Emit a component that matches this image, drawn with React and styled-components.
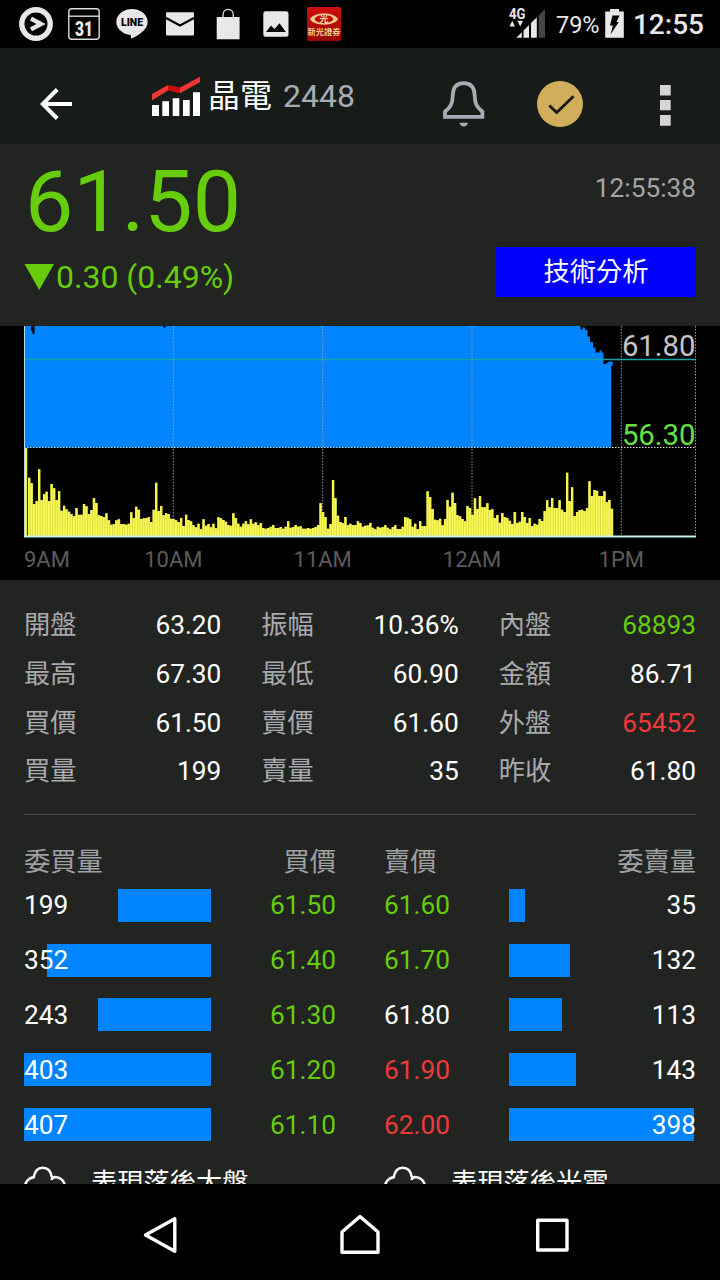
import React from "react";
import styled, { createGlobalStyle } from "styled-components";

const colors = {
  up: "#f03a3a",
  down: "#66cc0c",
  flat: "#ffffff",
};

const stats = [
  { label: "開盤", value: "63.20" },
  { label: "振幅", value: "10.36%" },
  { label: "內盤", value: "68893", trend: "down" },
  { label: "最高", value: "67.30" },
  { label: "最低", value: "60.90" },
  { label: "金額", value: "86.71" },
  { label: "買價", value: "61.50" },
  { label: "賣價", value: "61.60" },
  { label: "外盤", value: "65452", trend: "up" },
  { label: "買量", value: "199" },
  { label: "賣量", value: "35" },
  { label: "昨收", value: "61.80" },
];

const bids = [
  { qty: 199, price: "61.50", trend: "down" },
  { qty: 352, price: "61.40", trend: "down" },
  { qty: 243, price: "61.30", trend: "down" },
  { qty: 403, price: "61.20", trend: "down" },
  { qty: 407, price: "61.10", trend: "down" },
];

const asks = [
  { qty: 35, price: "61.60", trend: "down" },
  { qty: 132, price: "61.70", trend: "down" },
  { qty: 113, price: "61.80", trend: "flat" },
  { qty: 143, price: "61.90", trend: "up" },
  { qty: 398, price: "62.00", trend: "up" },
];

// a full bar is 402 lots, anything above is capped
const FULL_QTY = 402;
const barWidth = (qty) => `${Math.min(100, (qty / FULL_QTY) * 100)}%`;

// one bar per minute since the open, in thirds of a pixel
const volumes = [
  264, 175, 158, 96, 105, 200, 108, 125, 133, 105, 156, 143, 108, 134, 76, 91,
  80, 73, 66, 60, 84, 64, 64, 96, 89, 66, 78, 113, 99, 62, 60, 56, 68, 47, 34,
  36, 47, 50, 36, 36, 34, 37, 71, 54, 88, 79, 51, 53, 54, 57, 42, 79, 160, 75,
  90, 62, 68, 66, 52, 51, 47, 42, 54, 30, 64, 48, 44, 32, 26, 37, 20, 50, 31,
  36, 26, 37, 23, 56, 53, 48, 43, 33, 31, 68, 54, 37,
  28, 37, 44, 35, 50, 37, 41, 32, 39, 24, 22, 24, 28, 33, 24, 24, 27, 22, 28,
  44, 25, 27, 33, 28, 29, 22, 22, 24, 22, 24, 27, 33, 98, 72, 57, 22, 36, 168,
  113, 61, 42, 39, 57, 33, 37, 33, 33, 44, 39, 28, 31, 32, 39, 25, 20, 28, 25,
  27, 32, 25, 20, 27, 32, 21, 21, 28, 57, 55, 50, 28, 37, 21, 44, 30, 30, 134,
  117, 81, 49, 47, 52, 32, 51, 108, 88, 130, 99, 62, 59, 51, 44, 90, 84, 64,
  113, 81, 120,
  86, 86, 98, 78, 80, 54, 63, 40, 69, 57, 54, 46, 36, 72, 39, 43, 72, 57, 39,
  54, 30, 37, 34, 51, 45, 75, 107, 86, 114, 84, 84, 107, 79, 72, 190, 105, 146,
  60, 72, 77, 79, 75, 84, 164, 120, 138, 136, 120, 120, 134, 101, 108, 82,
];

const BASE = 210.5;
const STEP = 585.2 / (volumes.length - 1);

const volumePath = (width) =>
  volumes
    .map((v, i) => {
      const x = i === 0 ? 0.8 : 1.6 + i * STEP;
      const h = v / 3 + 0.5;
      return `M${x.toFixed(2)} ${BASE}v${-h.toFixed(1)}h${width}v${h.toFixed(1)}z`;
    })
    .join("");

const StatusIcons = () => (
  <StatusGroup>
    <svg width="48" height="48" viewBox="0 0 48 48">
      <circle cx="24" cy="24" r="14.2" fill="none" stroke="#e8e8e8" strokeWidth="5.4" />
      <path d="M19 18.6L29 24L19 29.4" fill="none" stroke="#e8e8e8" strokeWidth="4.4" />
    </svg>
    <svg width="48" height="48" viewBox="0 0 48 48">
      <rect x="8.8" y="8.8" width="30.4" height="30.4" rx="3" fill="none" stroke="#dcdcdc" strokeWidth="1.4" />
      <path d="M9 16.2H39" stroke="#dcdcdc" strokeWidth="1.4" />
      <text x="24" y="35.6" textAnchor="middle" fontSize="20.5" fontWeight="900" fill="#e8e8e8" textLength="18" lengthAdjust="spacingAndGlyphs">31</text>
    </svg>
    <svg width="48" height="48" viewBox="0 0 48 48">
      <path d="M24 9C15.2 9 8.3 14.8 8.3 22C8.3 28.5 14.2 33.9 22 34.9C23.6 35.2 23.1 36.8 22.9 38.8C29 36.5 39.7 30 39.7 22C39.7 14.8 32.8 9 24 9Z" fill="#e8e8e8" />
      <text x="24" y="26.4" textAnchor="middle" fontSize="11.2" fontWeight="900" fill="#000" textLength="22" lengthAdjust="spacingAndGlyphs">LINE</text>
    </svg>
    <svg width="48" height="48" viewBox="0 0 48 48">
      <rect x="10" y="12.3" width="28" height="23.2" rx="1" fill="#e8e8e8" />
      <path d="M10 18L24 25.4L38 18" fill="none" stroke="#000" strokeWidth="2.2" />
    </svg>
    <svg width="48" height="48" viewBox="0 0 48 48">
      <path d="M12.7 17H35.6V39.3H12.7Z" fill="#e8e8e8" />
      <path d="M19 19V15C19 7.5 29.3 7.5 29.3 15V19" fill="none" stroke="#e8e8e8" strokeWidth="1.3" />
    </svg>
    <svg width="48" height="48" viewBox="0 0 48 48">
      <rect x="11.3" y="11.3" width="25.2" height="25.4" rx="2.5" fill="#e8e8e8" />
      <path d="M14 32L19 25.5L22.5 29L27.5 23.3L33.8 32Z" fill="#000" />
    </svg>
    <svg width="48" height="48" viewBox="0 0 48 48">
      <defs>
        <linearGradient id="brand" x1="0" y1="0" x2="0" y2="1">
          <stop offset="0" stopColor="#d01010" />
          <stop offset="1" stopColor="#980400" />
        </linearGradient>
      </defs>
      <rect x="7" y="7" width="34" height="34" rx="1.5" fill="url(#brand)" />
      <path
        d="M10 19C13 11.500 35 11.500 38 19C35 26.500 13 26.500 10 19ZM14.500 19C17 24.500 31 24.500 33.500 19C31 13.500 17 13.500 14.500 19Z"
        fill="#f4c888"
        fillRule="evenodd"
      />
      <text x="24" y="22.3" textAnchor="middle" fontSize="9" fontWeight="700" fill="#f8d8a0">光</text>
      <text x="24" y="35" textAnchor="middle" fontSize="8.2" fontWeight="700" fill="#f4d090">新光證券</text>
    </svg>
  </StatusGroup>
);

const SignalIcon = () => (
  <svg width="36" height="48" viewBox="0 0 36 48">
    <text x="0" y="19.3" fontSize="14" fontWeight="700" fill="#e8e8e8" textLength="16.5" lengthAdjust="spacingAndGlyphs">4G</text>
    <path d="M0.5 26.5L3.2 20.800L6 26.5ZM8.400 20.800H14L11.2 26.5Z" fill="#e8e8e8" />
    <path d="M7.3 37.8L12.8 32.3V37.8ZM14.5 30.5L20 25V37.8H14.5ZM22 23L27.8 17.2V37.8H22Z" fill="#e8e8e8" />
    <path d="M29.6 15.4L36 9V37.8H29.6Z" fill="#444" />
  </svg>
);

const BatteryIcon = () => (
  <svg width="19" height="48" viewBox="0 0 19 48">
    <path d="M5 9H14V11.5H18.8V37.8H0.2V11.5H5Z" fill="#e8e8e8" />
    <path d="M7.5 15.5H14.5L11.5 22H13.8L5.5 34.5L7.9 25.5H5Z" fill="#000" />
  </svg>
);

const BackIcon = () => (
  <svg width="32" height="32" viewBox="0 0 32 32">
    <path d="M32 16H3M17.2 1.5L2.7 16L17.2 30.5" fill="none" stroke="#fff" strokeWidth="3.9" />
  </svg>
);

const LogoIcon = () => (
  <svg width="48" height="40" viewBox="0 0 48 40">
    <path d="M0 29H7V40H0ZM10.3 25.3H17V40H10.3ZM20.7 22.3H27.3V40H20.7ZM31 24H37.7V40H31ZM41 16.3H48V40H41Z" fill="#fff" />
    <path d="M0 17.9L16 8.9V14.5L0 24.4ZM28 11.5L48 0.7V6.2L28 17.2Z" fill="#f03535" />
    <path d="M16 8.9L28 11.5V17.2L16 14.5Z" fill="#cc0c0c" />
  </svg>
);

const BellIcon = () => (
  <svg width="42" height="48" viewBox="0 0 42 48">
    <path
      d="M2 36.8V31.7C7.5 27 9.5 24 9.7 16C9.8 8 13 3.200 20.7 3.200S31.600 8 31.7 16C31.9 24 33.9 27 39.4 31.7V36.8Z"
      fill="none"
      stroke="#a9abb5"
      strokeWidth="3.8"
    />
    <path d="M16.5 42.7H25C24.5 45 23 46.500 20.7 46.5S17 45 16.5 42.7Z" fill="#a9abb5" />
  </svg>
);

const CheckIcon = () => (
  <svg width="46" height="46" viewBox="0 0 46 46">
    <circle cx="23" cy="23" r="23" fill="#d0ae5c" />
    <path d="M12.3 24.5L19.7 31.5L36.5 15.3" fill="none" stroke="#1a1c18" strokeWidth="2.9" />
  </svg>
);

const MoreIcon = () => (
  <svg width="11" height="44" viewBox="0 0 11 44">
    <path d="M0 3H10.7V13.500H0ZM0 18H10.7V28.300H0ZM0 33H10.7V43.700H0Z" fill="#d6d4d6" />
  </svg>
);

const CloudIcon = () => (
  <svg width="42" height="34" viewBox="0 0 42 34">
    <path
      d="M27.500 14C28 11.800 29 11 31 11C37 11.500 41 15.500 41 21.500C41 27.500 36.500 32 31 32H11C5.500 32 1 27.500 1 21.500C1 16 4.500 11.800 9.800 11.100C10.800 5.500 14 1.800 18.700 1.800C23.300 1.800 26.800 5 27.800 11.100"
      fill="none"
      stroke="#fff"
      strokeWidth="2.600"
    />
  </svg>
);

const IntradayChart = () => (
  <svg width="672" height="212" viewBox="0 0 672 212">
    <path
      d="M0 0H7V5H8.5V8H10.5V0H139V1.5H142V0H556.5V3.5H558.5V1.5H561V4H563.5V10.5H566V16H569V21.5H571.5V26.5H575.5V24.5H577.5V26.5H579.5V38H582.5V36.5H584.5V35.5H588.7V39.5H587.3V121.5H0Z"
      fill="#0084ff"
    />
    <path d="M0 33.5H672" stroke="#12a5a8" strokeWidth="1.4" />
    <path d="M0 121.5H672" stroke="#d0d0d0" strokeDasharray="1.5 1.5" />
    <path
      d="M149.3 0V210M298.7 0V210M448 0V210M597.3 0V210M671.5 0V210"
      stroke="#a0a8b0"
      strokeDasharray="1.5 1.5"
      strokeWidth="0.9"
    />
    <path d={volumePath(2.5)} fill="#d2d244" />
    <path d={volumePath(1.8)} fill="#fafa52" />
    <path d="M0.5 0V210" stroke="#c8e4e8" strokeWidth="0.9" />
    <path d="M0 210.5H672" stroke="#c4f0ee" strokeWidth="2" />
    <text x="671.5" y="29.8" textAnchor="end" fontSize="29.3" fill="#c4c4c4">61.80</text>
    <text x="671.5" y="118.5" textAnchor="end" fontSize="29.3" fill="#66e045">56.30</text>
  </svg>
);

export default function App() {
  return (
    <>
      <GlobalStyle />
      <Screen>
        <StatusBar>
          <StatusIcons />
          <StatusGroup>
            <SignalIcon />
            <Percent>79%</Percent>
            <BatteryIcon />
            <Clock>12:55</Clock>
          </StatusGroup>
        </StatusBar>

        <Header>
          <BackIcon />
          <Title>
            <LogoIcon />
            <StockName>晶電</StockName>
            <StockCode>2448</StockCode>
          </Title>
          <Actions>
            <BellIcon />
            <CheckIcon />
            <MoreIcon />
          </Actions>
        </Header>

        <Quote>
          <QuoteMain>
            <Price>61.50</Price>
            <Change>
              <DownArrow width="30" height="26" viewBox="0 0 30 26">
                <path d="M0.5 0H30L15.2 26Z" fill={colors.down} />
              </DownArrow>
              0.30 (0.49%)
            </Change>
          </QuoteMain>
          <QuoteSide>
            <Time>12:55:38</Time>
            <AnalysisButton>技術分析</AnalysisButton>
          </QuoteSide>
        </Quote>

        <ChartPanel>
          <IntradayChart />
          <Axis>
            <span>9AM</span>
            <span>10AM</span>
            <span>11AM</span>
            <span>12AM</span>
            <span>1PM</span>
          </Axis>
        </ChartPanel>

        <Details>
          <Stats>
            {stats.map((item) => (
              <Stat key={item.label}>
                <Label>{item.label}</Label>
                <Value $trend={item.trend}>{item.value}</Value>
              </Stat>
            ))}
          </Stats>

          <Book>
            <div>
              <BookHead>
                <span>委買量</span>
                <span>買價</span>
              </BookHead>
              {bids.map((row) => (
                <BookRow key={row.price}>
                  <Depth>
                    <Bar $side="bid" style={{ width: barWidth(row.qty) }} />
                    <Qty>{row.qty}</Qty>
                  </Depth>
                  <Value $trend={row.trend}>{row.price}</Value>
                </BookRow>
              ))}
            </div>
            <div>
              <BookHead>
                <span>賣價</span>
                <span>委賣量</span>
              </BookHead>
              {asks.map((row) => (
                <BookRow key={row.price}>
                  <Value $trend={row.trend}>{row.price}</Value>
                  <Depth>
                    <Bar $side="ask" style={{ width: barWidth(row.qty) }} />
                    <Qty $right>{row.qty}</Qty>
                  </Depth>
                </BookRow>
              ))}
            </div>
          </Book>

          <Outlook>
            <OutlookItem>
              <CloudIcon />
              表現落後大盤
            </OutlookItem>
            <OutlookItem>
              <CloudIcon />
              表現落後光電
            </OutlookItem>
          </Outlook>
        </Details>

        <NavBar>
          <svg width="40" height="42" viewBox="0 0 40 42">
            <path d="M34.8 4.8V37.2L5.5 21Z" fill="none" stroke="#fff" strokeWidth="3.4" strokeLinejoin="round" />
          </svg>
          <svg width="40" height="42" viewBox="0 0 40 42">
            <path d="M2 38.3V18L20 2.5L38 18V38.3Z" fill="none" stroke="#fff" strokeWidth="3.4" strokeLinejoin="round" />
          </svg>
          <svg width="40" height="42" viewBox="0 0 40 42">
            <rect x="5.7" y="6.3" width="29.3" height="29.7" fill="none" stroke="#fff" strokeWidth="3.4" strokeLinejoin="round" />
          </svg>
        </NavBar>
      </Screen>
    </>
  );
}

const GlobalStyle = createGlobalStyle`
  * {
    box-sizing: border-box;
  }
  body {
    margin: 0;
    background: #000;
  }
  svg {
    display: block;
    flex-shrink: 0;
  }
`;

const Screen = styled.div`
  display: flex;
  flex-direction: column;
  width: 720px;
  height: 1280px;
  overflow: hidden;
  background: #222422;
  color: #fff;
  font-family: Roboto, "Noto Sans CJK TC", sans-serif;
  font-size: 26.25px;
`;

const StatusBar = styled.div`
  display: flex;
  justify-content: space-between;
  height: 48px;
  flex-shrink: 0;
  padding: 0 16px 0 12px;
  background: #000;
`;

const StatusGroup = styled.div`
  display: flex;
  color: #e8e8e8;
  line-height: 50px;
`;

const Percent = styled.span`
  width: 60px;
  padding-left: 11px;
  font-size: 23.5px;
`;

const Clock = styled.span`
  padding-left: 9px;
  font-size: 28px;
  font-weight: 500;
`;

const Header = styled.header`
  display: flex;
  align-items: center;
  height: 96px;
  flex-shrink: 0;
  padding: 16px 49px 0 40px;
  background: #181c19;
`;

const Title = styled.div`
  display: flex;
  align-items: center;
  padding: 0 0 16px 80px;
  font-size: 32px;
  line-height: 40px;
`;

const StockName = styled.span`
  margin-left: 8px;
`;

const StockCode = styled.span`
  margin-left: 11px;
  color: #a9abb5;
`;

const Actions = styled.div`
  display: flex;
  align-items: center;
  margin-left: auto;

  svg:nth-child(2) {
    margin: 0 77px 0 52px;
  }
`;

const Quote = styled.section`
  display: flex;
  justify-content: space-between;
  height: 182px;
  flex-shrink: 0;
  padding: 0 24px;
`;

const QuoteMain = styled.div`
  color: ${colors.down};
`;

const Price = styled.div`
  padding: 8px 0 0 1px;
  font-size: 86px;
  line-height: 100px;
`;

const Change = styled.div`
  display: flex;
  align-items: center;
  padding-top: 5px;
  font-size: 32px;
  line-height: 40px;
`;

const DownArrow = styled.svg`
  margin-right: 2px;
`;

const QuoteSide = styled.div`
  display: flex;
  flex-direction: column;
  align-items: flex-end;
`;

const Time = styled.span`
  padding-top: 28px;
  color: #a4a4a6;
  line-height: 32px;
`;

const AnalysisButton = styled.button`
  width: 200px;
  height: 50px;
  margin-top: 43px;
  padding: 0 0 5px;
  border: none;
  background: #0000ff;
  color: #fff;
  font: inherit;
`;

const ChartPanel = styled.section`
  height: 254px;
  flex-shrink: 0;
  padding: 0 24px;
  background: #000;
`;

const Axis = styled.div`
  display: grid;
  grid-template-columns: 1fr repeat(4, 2fr);
  color: #5c5c5c;
  font-size: 22px;
  line-height: 44px;
  text-align: center;

  span:first-child {
    text-align: left;
  }
`;

const Details = styled.section`
  flex: 1;
  min-height: 0;
  overflow: hidden;
  padding: 0 24px;
`;

const Stats = styled.div`
  display: grid;
  grid-template-columns: repeat(3, 1fr);
  grid-auto-rows: 48.7px;
  column-gap: 40px;
  height: 235px;
  padding-top: 21px;
  border-bottom: 1px solid #484a48;
`;

const Stat = styled.div`
  display: flex;
  align-items: center;
  justify-content: space-between;
`;

const Label = styled.span`
  padding-bottom: 4px;
  color: #a9a9ae;
`;

const Value = styled.span`
  color: ${({ $trend }) => colors[$trend || "flat"]};
`;

const Book = styled.div`
  display: grid;
  grid-template-columns: 1fr 1fr;
  column-gap: 48px;
  padding-top: 28px;
`;

const BookHead = styled.div`
  display: flex;
  justify-content: space-between;
  height: 35px;
  color: #a0a0a5;
  line-height: 39px;
`;

const BookRow = styled.div`
  display: flex;
  align-items: center;
  justify-content: space-between;
  height: 54.8px;
`;

const Depth = styled.div`
  display: grid;
  align-items: center;
  width: 187px;
`;

const Bar = styled.div`
  grid-area: 1 / 1;
  justify-self: ${({ $side }) => ($side === "bid" ? "end" : "start")};
  height: 33px;
  background: #0084ff;
`;

const Qty = styled.span`
  grid-area: 1 / 1;
  text-align: ${({ $right }) => ($right ? "right" : "left")};
`;

const Outlook = styled.div`
  display: grid;
  grid-template-columns: 1fr 1fr;
  column-gap: 48px;
  padding-top: 14px;
`;

const OutlookItem = styled.div`
  display: flex;
  align-items: center;
  gap: 25px;
  line-height: 34px;
  white-space: nowrap;
`;

const NavBar = styled.nav`
  display: flex;
  align-items: center;
  height: 96px;
  flex-shrink: 0;
  padding: 6px 0 0 140px;
  background: #000;

  svg:nth-child(2) {
    margin: 0 152px 0 160px;
  }
`;
